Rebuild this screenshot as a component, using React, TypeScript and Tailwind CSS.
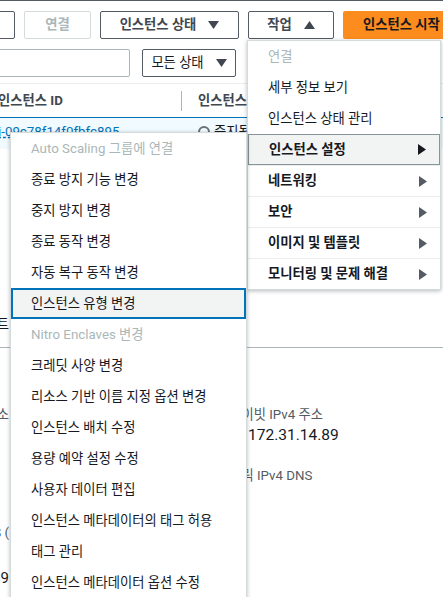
import React from "react";

type Item = { t: string; d?: boolean; sub?: boolean; active?: boolean };

const actions: Item[] = [
  { t: "연결", d: true },
  { t: "세부 정보 보기" },
  { t: "인스턴스 상태 관리" },
  { t: "인스턴스 설정", sub: true, active: true },
  { t: "네트워킹", sub: true },
  { t: "보안", sub: true },
  { t: "이미지 및 템플릿", sub: true },
  { t: "모니터링 및 문제 해결", sub: true },
];

const settings: Item[] = [
  { t: "Auto Scaling 그룹에 연결", d: true },
  { t: "종료 방지 기능 변경" },
  { t: "중지 방지 변경" },
  { t: "종료 동작 변경" },
  { t: "자동 복구 동작 변경" },
  { t: "인스턴스 유형 변경", active: true },
  { t: "Nitro Enclaves 변경", d: true },
  { t: "크레딧 사양 변경" },
  { t: "리소스 기반 이름 지정 옵션 변경" },
  { t: "인스턴스 배치 수정" },
  { t: "용량 예약 설정 수정" },
  { t: "사용자 데이터 편집" },
  { t: "인스턴스 메타데이터의 태그 허용" },
  { t: "태그 관리" },
  { t: "인스턴스 메타데이터 옵션 수정" },
];

function Caret({ dir, color = "#414750" }: { dir: "down" | "up" | "right"; color?: string }) {
  if (dir === "right")
    return (
      <svg width="8" height="11" viewBox="0 0 8 11" aria-hidden="true">
        <polygon points="0,0 8,5.5 0,11" fill={color} />
      </svg>
    );
  return (
    <svg width="11" height="8" viewBox="0 0 11 8" aria-hidden="true">
      <polygon points={dir === "down" ? "0,0 11,0 5.5,8" : "0,8 11,8 5.5,0"} fill={color} />
    </svg>
  );
}

// text whose end peeks out at the left edge of the page
function ClipLeft({ text, className = "" }: { text: string; className?: string }) {
  return (
    <div className={`flex w-[9px] justify-end whitespace-nowrap ${className}`}>
      <span>{text}</span>
    </div>
  );
}

export default function App() {
  return (
    <div className="relative h-[597px] w-[443px] overflow-hidden bg-white font-[Roboto,'Noto_Sans_CJK_KR',sans-serif] text-[13.3px] text-[#16191f]">
      <div className="h-px bg-[#545b64]" />

      {/* toolbar */}
      <div className="ml-[-60px] mt-[10px] flex h-[28px] gap-[9px] whitespace-nowrap font-bold">
        <button type="button" className="w-[75px] shrink-0 rounded-[2px] border border-[#545b64]" />
        <button type="button" className="w-[67px] shrink-0 rounded-[2px] border border-[#d5dbdb] text-[#aab7b8]">
          연결
        </button>
        <button type="button" className="flex w-[139px] shrink-0 items-center justify-center gap-[12px] rounded-[2px] border border-[#545b64] text-[#414750]">
          인스턴스 상태 <Caret dir="down" />
        </button>
        <button type="button" className="flex w-[86px] shrink-0 items-center justify-center gap-[12px] rounded-[2px] border border-[#545b64] text-[#414750]">
          작업 <Caret dir="up" />
        </button>
        <button type="button" className="w-[120px] shrink-0 rounded-[2px] bg-[#fd8c1e] pl-[20px] text-left text-[#16191f]">
          인스턴스 시작
        </button>
      </div>

      {/* filters */}
      <div className="ml-[-60px] mt-[10px] flex h-[28px] gap-[12px]">
        <div className="w-[190px] shrink-0 rounded-[2px] border border-[#aab7b8]" />
        <button type="button" className="flex w-[94px] shrink-0 items-center justify-center gap-[12px] rounded-[2px] border border-[#545b64] text-[#16191f]">
          모든 상태 <Caret dir="down" />
        </button>
      </div>

      {/* table header */}
      <div className="mt-[6px] flex h-[34px] items-center border-t border-[#eaeded] font-bold text-[#414750]">
        <div className="ml-[-2px] w-[183px]">인스턴스 ID</div>
        <div className="h-[20px] w-px bg-[#aab7b8]" />
        <div className="ml-[16px]">인스턴스 상태</div>
      </div>

      {/* selected row */}
      <div className="flex h-[32px] items-start border-t border-[#0073bb] bg-[#f1faff] pt-[4px]">
        <div className="ml-[-2px] w-[200px] text-[#0073bb] underline decoration-dashed">i-09c78f14f0fbfc895</div>
        <div className="flex items-center gap-[4px]">
          <span className="h-[12px] w-[12px] rounded-full border-2 border-[#687078]" />
          중지됨
        </div>
      </div>

      {/* lower pane */}
      <div className="mt-[166px]">
        <ClipLeft text="스토리지 | 상태 검사 | 모니터링 | 네트워킹 | 시트" />
      </div>
      <div className="mt-[12px] h-px bg-[#aab7b8]" />

      <div className="mt-[57px] flex">
        <div className="flex flex-col text-[#545b64]">
          <ClipLeft text="퍼블릭 IPv4 주소" className="h-[22px]" />
          <div className="h-[96px]" />
          <ClipLeft text="퍼블릭 IPv4 DNS (" className="h-[44px]" />
          <ClipLeft text="ec2-3-35-1-89" className="text-[15px] text-[#16191f]" />
        </div>
        <div className="ml-[208px] flex flex-col">
          <div className="h-[19px] text-[#545b64]">프라이빗 IPv4 주소</div>
          <div className="h-[42px] pl-[31px] text-[15.5px]">172.31.14.89</div>
          <div className="text-[#545b64]">퍼블릭 IPv4 DNS</div>
        </div>
      </div>

      {/* actions dropdown */}
      <div className="absolute left-[247px] top-[40px] w-[194px] border border-[#d5dbdb] bg-white shadow-[0_1px_4px_rgba(0,28,36,0.3)]">
        {actions.map((a, i) => (
          <div
            key={a.t}
            className={`flex h-[31px] items-center justify-between whitespace-nowrap pl-[20px] pr-[13px] ${
              i > 3 ? "border-t border-[#eaeded]" : ""
            } ${a.active ? "border border-[#879596] bg-[#f2f3f3]" : ""} ${
              a.d ? "text-[#aab7b8]" : ""
            } ${a.sub ? "font-bold" : ""}`}
          >
            <span>{a.t}</span>
            {a.sub && <Caret dir="right" color={a.active ? "#16191f" : "#545b64"} />}
          </div>
        ))}
      </div>

      {/* instance settings submenu */}
      <div className="absolute left-[10px] top-[132px] w-[237px] border border-[#d5dbdb] bg-white shadow-[0_1px_4px_rgba(0,28,36,0.3)]">
        {settings.map((s) => (
          <div
            key={s.t}
            className={`flex h-[31px] items-center whitespace-nowrap ${
              s.active ? "border-2 border-[#0073bb] bg-[#f2f3f3] pl-[18px]" : "pl-[20px]"
            } ${s.d ? "text-[#aab7b8]" : ""}`}
          >
            {s.t}
          </div>
        ))}
      </div>
    </div>
  );
}
